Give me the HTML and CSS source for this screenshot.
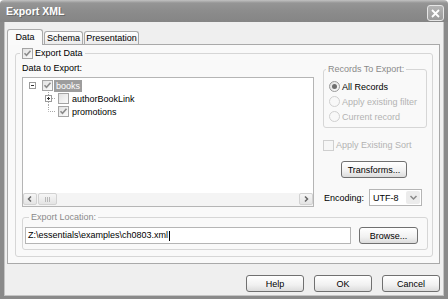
FILE: index.html
```html
<!DOCTYPE html>
<html lang="en">
  <head>
    <meta charset="UTF-8" />
    <meta name="viewport" content="width=device-width, initial-scale=1.0" />
    <title>Export XML</title>
    <link rel="stylesheet" href="styles.css">
  </head>
  <body>
    <div class="window">
      <div class="titlebar">
        <span class="title">Export XML</span>
        <span class="close-btn">
          <svg width="9" height="9" viewBox="0 0 9 9"><path d="M1 1 L8 8 M8 1 L1 8" stroke="#fff" stroke-width="1.8" fill="none"/></svg>
        </span>
      </div>
      <div class="frame">
        <div class="tabs">
          <span class="tab active">Data</span>
          <span class="tab schema">Schema</span>
          <span class="tab presentation">Presentation</span>
        </div>
        <div class="tab-panel">
          <fieldset class="group export-data">
            <legend class="check-legend">
              <span class="check checked"><svg width="9" height="9" viewBox="0 0 9 9"><path d="M1.5 4.2 L3.5 6.3 L7.5 1.8" stroke="#8c8c8c" stroke-width="1.6" fill="none"/></svg></span>
              Export Data
            </legend>
            <div class="main-row">
              <div class="tree-col">
                <div class="field-label">Data to Export:</div>
                <div class="tree">
                  <div class="tree-items">
                    <div class="tree-row">
                      <span class="expander">
                        <svg width="13" height="13" viewBox="0 0 13 13"><rect x="3.5" y="3.5" width="6" height="6" fill="#fff" stroke="#9a9a9a"/><path d="M5 6.5 H8" stroke="#333"/></svg>
                      </span>
                      <span class="check checked"><svg width="9" height="9" viewBox="0 0 9 9"><path d="M1.5 4.2 L3.5 6.3 L7.5 1.8" stroke="#8c8c8c" stroke-width="1.6" fill="none"/></svg></span>
                      <span class="node-label selected">books</span>
                    </div>
                    <div class="tree-row level2">
                      <span class="expander">
                        <svg width="13" height="13" viewBox="0 0 13 13"><path d="M6.5 0 V13 M10 6.5 H13" stroke="#a8a8a8" stroke-dasharray="1 1"/><rect x="3.5" y="3.5" width="6" height="6" fill="#fff" stroke="#9a9a9a"/><path d="M5 6.5 H8 M6.5 5 V8" stroke="#333"/></svg>
                      </span>
                      <span class="check"></span>
                      <span class="node-label">authorBookLink</span>
                    </div>
                    <div class="tree-row level2">
                      <span class="expander">
                        <svg width="13" height="13" viewBox="0 0 13 13"><path d="M6.5 0 V6.5 H13" stroke="#a8a8a8" stroke-dasharray="1 1" fill="none"/></svg>
                      </span>
                      <span class="check checked"><svg width="9" height="9" viewBox="0 0 9 9"><path d="M1.5 4.2 L3.5 6.3 L7.5 1.8" stroke="#8c8c8c" stroke-width="1.6" fill="none"/></svg></span>
                      <span class="node-label">promotions</span>
                    </div>
                  </div>
                  <div class="hscroll">
                    <span class="sb-btn">
                      <svg width="8" height="8" viewBox="0 0 8 8"><path d="M5 1.5 L2.5 4 L5 6.5" stroke="#666" stroke-width="1.5" fill="none"/></svg>
                    </span>
                    <span class="sb-thumb">
                      <svg width="7" height="5" viewBox="0 0 7 5"><path d="M1.5 0 V5 M3.5 0 V5 M5.5 0 V5" stroke="#b8b8b8"/></svg>
                    </span>
                    <span class="sb-track"></span>
                    <span class="sb-btn">
                      <svg width="8" height="8" viewBox="0 0 8 8"><path d="M3 1.5 L5.5 4 L3 6.5" stroke="#666" stroke-width="1.5" fill="none"/></svg>
                    </span>
                  </div>
                </div>
              </div>

              <div class="side-col">
                <fieldset class="group records">
                  <legend class="muted">Records To Export:</legend>
                  <div class="radio-row"><span class="radio on"></span>All Records</div>
                  <div class="radio-row disabled"><span class="radio"></span>Apply existing filter</div>
                  <div class="radio-row disabled"><span class="radio"></span>Current record</div>
                </fieldset>
                <div class="sort-row disabled"><span class="check blank"></span>Apply Existing Sort</div>
                <button class="btn transforms">Transforms...</button>
                <div class="encoding">
                  <span class="encoding-label">Encoding:</span>
                  <span class="select">
                    <span class="select-value">UTF-8</span>
                    <span class="select-drop">
                      <svg width="9" height="7" viewBox="0 0 9 7"><path d="M1.5 2 L4.5 5 L7.5 2" stroke="#8a8a8a" stroke-width="1.5" fill="none"/></svg>
                    </span>
                  </span>
                </div>
              </div>
            </div>

            <fieldset class="group location">
              <legend class="muted">Export Location:</legend>
              <div class="location-row">
                <span class="textbox">Z:\essentials\examples\ch0803.xml<span class="caret"></span></span>
                <button class="btn browse">Browse...</button>
              </div>
            </fieldset>
          </fieldset>
        </div>

        <div class="dialog-buttons">
          <button class="btn">Help</button>
          <button class="btn">OK</button>
          <button class="btn">Cancel</button>
        </div>
      </div>
    </div>
  </body>
</html>
```

FILE: styles.css
```css
* {
  box-sizing: border-box;
}

body {
  margin: 0;
  font-family: "Liberation Sans", Arial, sans-serif;
  font-size: 9px;
  color: #000;
  background-color: #fff;
}

.window {
  width: 448px;
  height: 299px;
  display: flex;
  flex-direction: column;
}

/* title bar */
.titlebar {
  height: 22px;
  flex-shrink: 0;
  display: flex;
  align-items: center;
  justify-content: space-between;
  padding: 0 4px 0 6px;
  background: linear-gradient(#c2c2c2, #959595 3px, #8c8c8c 50%, #858585);
  border-radius: 4px 4px 0 0;
}

.title {
  color: #fff;
  font-weight: bold;
  font-size: 10.5px;
  text-shadow: 1px 1px 0 #6a6a6a;
}

.close-btn {
  width: 17px;
  height: 16px;
  margin-top: 4px;
  display: flex;
  align-items: center;
  justify-content: center;
  background: linear-gradient(#b4b4b4, #9c9c9c);
  border: 1px solid #e6e6e6;
  border-radius: 3px;
}

/* window frame */
.frame {
  flex: 1;
  display: flex;
  flex-direction: column;
  background-color: #efefef;
  border: 4px solid #8a8a8a;
  border-top: none;
  box-shadow: inset 1px 0 0 #c4c4c4, inset -1px 0 0 #c4c4c4, inset 0 -1px 0 #c4c4c4;
  padding: 7px 4px 4px 3px;
}

.tabs {
  display: flex;
  align-items: flex-end;
  height: 15px;
}

.tab {
  height: 13px;
  line-height: 12px;
  text-align: center;
  border: 1px solid #a9a9a9;
  border-bottom: none;
  border-radius: 3px 3px 0 0;
  background: linear-gradient(#ffffff, #ebebeb);
}

.tab.active {
  width: 36px;
  height: 16px;
  line-height: 14px;
  margin-bottom: -1px;
  position: relative;
  z-index: 1;
  background: #fafafa;
}

.tab.schema {
  width: 39px;
  margin-left: 1px;
}

.tab.presentation {
  width: 55px;
  margin-left: 1px;
}

.tab-panel {
  border: 1px solid #a9a9a9;
  background-color: #f9f9f9;
  padding: 2px 6px 6px 7px;
}

/* group boxes */
.group {
  margin: 0;
  min-width: 0;
  border: 1px solid #d6d6d6;
  border-radius: 3px;
}

.group legend {
  line-height: 12px;
  height: 12px;
  padding: 0 2px;
}

.export-data {
  padding: 3px 4px 6px 6px;
}

.check-legend {
  display: flex;
  align-items: center;
  margin-left: -2px;
}

.check-legend .check {
  margin-right: 2px;
}

.muted {
  color: #8a8a8a;
}

.disabled {
  color: #b3b3b3;
}

.main-row {
  display: flex;
  gap: 8px;
  margin-bottom: 4px;
}

.tree-col {
  width: 292px;
}

.field-label {
  line-height: 12px;
  margin-bottom: 3px;
}

/* tree */
.tree {
  height: 130px;
  border: 1px solid #b5b5b5;
  background-color: #fff;
  display: flex;
  flex-direction: column;
}

.tree-items {
  flex: 1;
  padding: 1px 0 0 3px;
}

.tree-row {
  height: 13px;
  display: flex;
  align-items: center;
}

.tree-row.level2 {
  margin-left: 16px;
}

.expander {
  width: 13px;
  height: 13px;
}

.expander svg {
  display: block;
}

.tree-row .check {
  margin-left: 3px;
}

.node-label {
  margin-left: 1px;
  padding: 0 2px;
  line-height: 12px;
}

.node-label.selected {
  background-color: #9d9d9d;
  color: #fff;
}

.check {
  width: 11px;
  height: 11px;
  flex-shrink: 0;
  display: flex;
  align-items: center;
  justify-content: center;
  border: 1px solid #a4a4a4;
  background: linear-gradient(135deg, #e2e2e2, #fbfbfb);
}

.check.blank {
  border-color: #cfcfcf;
  background: #f6f6f6;
}

.hscroll {
  height: 13px;
  display: flex;
  background-color: #f4f4f4;
  padding: 0 0 1px 0;
}

.sb-btn,
.sb-thumb {
  display: flex;
  align-items: center;
  justify-content: center;
  border: 1px solid #d2d2d2;
  border-radius: 2px;
  background: linear-gradient(#f6f6f6, #e4e4e4);
}

.sb-btn {
  width: 14px;
}

.sb-thumb {
  width: 19px;
  margin-left: 1px;
}

.sb-track {
  flex: 1;
}

/* right column */
.side-col {
  flex: 1;
  display: flex;
  flex-direction: column;
  align-items: flex-start;
  padding-top: 1px;
}

.records {
  width: 104px;
  margin-left: 1px;
  padding: 4px 4px 3px 5px;
}

.records legend {
  margin-left: -3px;
}

.radio-row {
  height: 15px;
  display: flex;
  align-items: center;
}

.radio {
  width: 11px;
  height: 11px;
  margin-right: 2px;
  border: 1px solid #d0d0d0;
  border-radius: 50%;
  background: #f8f8f8;
  display: flex;
  align-items: center;
  justify-content: center;
}

.radio.on {
  border-color: #9a9a9a;
  background: linear-gradient(135deg, #e0e0e0, #fafafa);
}

.radio.on::after {
  content: "";
  width: 5px;
  height: 5px;
  border-radius: 50%;
  background-color: #6e6e6e;
}

.sort-row {
  margin-top: 11px;
  margin-left: 1px;
  height: 12px;
  display: flex;
  align-items: center;
  gap: 2px;
}

.btn {
  height: 17px;
  padding: 0;
  font-family: inherit;
  font-size: 9px;
  color: #000;
  border: 1px solid #707070;
  border-radius: 3px;
  background: linear-gradient(#ffffff, #f1f1f1 60%, #dcdcdc);
}

.transforms {
  width: 66px;
  margin-top: 10px;
  margin-left: 19px;
}

.encoding {
  margin-top: 11px;
  display: flex;
  align-items: center;
}

.encoding-label {
  width: 47px;
  padding-left: 2px;
}

.select {
  width: 53px;
  height: 17px;
  display: flex;
  align-items: center;
  border: 1px solid #b5b5b5;
  background-color: #fff;
  padding: 1px;
}

.select-value {
  flex: 1;
  padding-left: 2px;
}

.select-drop {
  width: 14px;
  height: 13px;
  display: flex;
  align-items: center;
  justify-content: center;
  border-radius: 2px;
  background-color: #ececec;
}

/* export location */
.location {
  padding: 4px 9px 5px 2px;
}

.location legend {
  margin-left: 4px;
}

.location-row {
  display: flex;
  align-items: center;
  gap: 8px;
}

.textbox {
  flex: 1;
  height: 17px;
  line-height: 15px;
  padding-left: 2px;
  border: 1px solid #b5b5b5;
  background-color: #fff;
  display: flex;
  align-items: center;
}

.caret {
  width: 1px;
  height: 10px;
  margin-left: 1px;
  background-color: #000;
}

.browse {
  width: 59px;
}

/* bottom buttons */
.dialog-buttons {
  margin-top: 11px;
  display: flex;
  justify-content: flex-end;
  gap: 10px;
}

.dialog-buttons .btn {
  width: 58px;
}
```
